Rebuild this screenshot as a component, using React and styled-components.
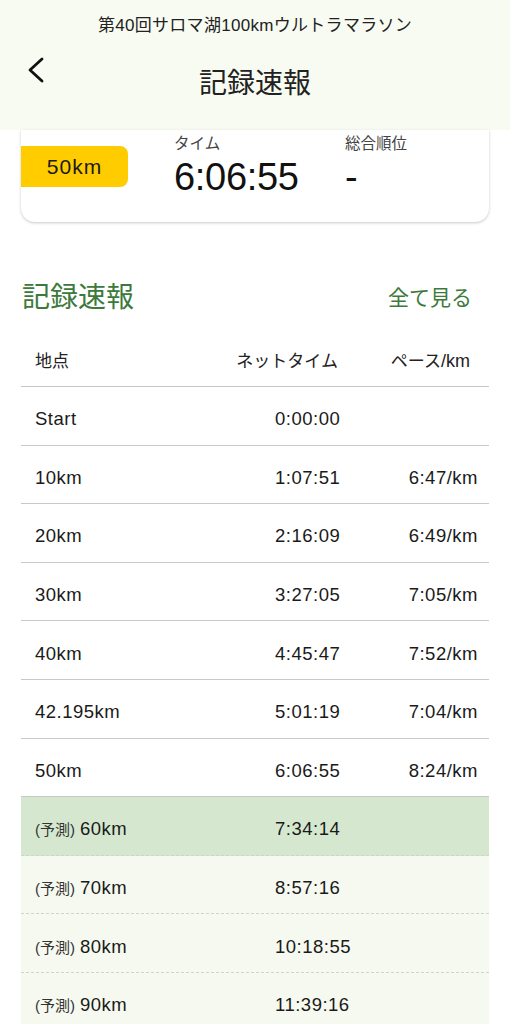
import React from "react";
import styled, { createGlobalStyle } from "styled-components";

const GlobalStyle = createGlobalStyle`
  html, body {
    margin: 0;
    padding: 0;
    background: #ffffff;
  }
  body {
    font-family: "Liberation Sans", "Noto Sans CJK JP", sans-serif;
    color: #1c1c1c;
    -webkit-font-smoothing: antialiased;
  }
  * { box-sizing: border-box; }
`;

const Page = styled.div`
  width: 510px;
  min-height: 1024px;
  overflow: hidden;
`;

const Header = styled.header`
  background: #f8fbf1;
  height: 130px;
  padding-top: 14px;
  display: flex;
  flex-direction: column;
`;

const EventTitle = styled.div`
  text-align: center;
  font-size: 17px;
  line-height: 24px;
  letter-spacing: 0.3px;
  color: #222;
`;

const NavRow = styled.div`
  display: grid;
  grid-template-columns: 30px 1fr 30px;
  padding: 0 27px;
`;

const BackButton = styled.button`
  margin-top: 19px;
  width: 20px;
  height: 26px;
  padding: 0;
  border: none;
  background: transparent;
  display: flex;
  align-items: center;
  justify-content: flex-start;
  cursor: pointer;
`;

const PageTitle = styled.h1`
  margin: 25.5px 0 0;
  text-align: center;
  font-size: 28px;
  line-height: 40px;
  font-weight: 400;
  color: #222;
`;

const SummaryCard = styled.section`
  margin: 0 21px;
  height: 92px;
  background: #fff;
  border-radius: 0 0 14px 14px;
  box-shadow: 0 1px 3px rgba(0, 0, 0, 0.22);
  display: grid;
  grid-template-columns: 153px 171px 1fr;
  align-items: start;
`;

const DistanceBadge = styled.div`
  margin-top: 16px;
  width: 107px;
  height: 41px;
  background: #ffcc00;
  border-radius: 0 8px 8px 0;
  display: flex;
  align-items: center;
  justify-content: center;
  font-size: 21px;
  letter-spacing: 1px;
  color: #1a1a1a;
`;

const Stat = styled.div`
  display: flex;
  flex-direction: column;
  padding-top: 4px;
`;

const StatLabel = styled.span`
  font-size: 15.5px;
  line-height: 20px;
  color: #444;
`;

const StatValue = styled.span`
  margin-top: 3px;
  font-size: 38px;
  line-height: 40px;
  letter-spacing: -0.3px;
  color: #111;
`;

const SectionHead = styled.div`
  margin-top: 56px;
  display: flex;
  align-items: center;
  justify-content: space-between;
  padding: 0 38px 0 22px;
  height: 40px;
`;

const SectionTitle = styled.h2`
  margin: 0;
  font-size: 28px;
  line-height: 40px;
  font-weight: 400;
  color: #3c7a3c;
`;

const SeeAll = styled.a`
  font-size: 21px;
  line-height: 30px;
  color: #3c7a3c;
  text-decoration: none;
  cursor: pointer;
`;

const Table = styled.div`
  margin: 12px 21px 0;
`;

const HeadRow = styled.div`
  height: 57px;
  display: grid;
  grid-template-columns: 1fr 140px 132px;
  align-items: center;
  padding: 3px 19px 0 14px;
  border-bottom: 1.5px solid #c6c6c6;
  font-size: 17px;
  color: #222;
`;

const HeadCell = styled.span`
  text-align: ${(p) => p.$align || "left"};
`;

const PaceUnit = styled.span`
  font-size: 18px;
`;

const Row = styled.div`
  height: 58.6px;
  display: grid;
  grid-template-columns: 240px 1fr auto;
  align-items: center;
  padding: 7px 11px 0 14px;
  background: ${(p) =>
    p.$variant === "current" ? "#d5e8cf" : p.$variant === "forecast" ? "#f6f9ef" : "#fff"};
  border-bottom: 1.5px ${(p) => (p.$dashed ? "dashed" : "solid")}
    ${(p) => (p.$dashed ? "#cfd4ca" : "#c8c8c8")};
  font-size: 18.5px;
  letter-spacing: 0.5px;
  color: #1a1a1a;
`;

const Cell = styled.span`
  text-align: ${(p) => p.$align || "left"};
  white-space: nowrap;
`;

const ForecastTag = styled.span`
  font-size: 15px;
  letter-spacing: 0;
  color: #333;
  margin-right: 5px;
`;

const splits = [
  { point: "Start", time: "0:00:00", pace: "" },
  { point: "10km", time: "1:07:51", pace: "6:47/km" },
  { point: "20km", time: "2:16:09", pace: "6:49/km" },
  { point: "30km", time: "3:27:05", pace: "7:05/km" },
  { point: "40km", time: "4:45:47", pace: "7:52/km" },
  { point: "42.195km", time: "5:01:19", pace: "7:04/km" },
  { point: "50km", time: "6:06:55", pace: "8:24/km" },
];

const forecasts = [
  { point: "60km", time: "7:34:14", current: true },
  { point: "70km", time: "8:57:16" },
  { point: "80km", time: "10:18:55" },
  { point: "90km", time: "11:39:16" },
];

const ChevronLeft = () => (
  <svg width="18" height="26" viewBox="0 0 18 26" fill="none">
    <polyline
      points="15,2 3,13 15,24"
      stroke="#111"
      strokeWidth="2.8"
      strokeLinecap="round"
      strokeLinejoin="round"
    />
  </svg>
);

export default function App() {
  return (
    <Page>
      <GlobalStyle />
      <Header>
        <EventTitle>第40回サロマ湖100kmウルトラマラソン</EventTitle>
        <NavRow>
          <BackButton aria-label="戻る">
            <ChevronLeft />
          </BackButton>
          <PageTitle>記録速報</PageTitle>
          <span />
        </NavRow>
      </Header>

      <SummaryCard>
        <DistanceBadge>50km</DistanceBadge>
        <Stat>
          <StatLabel>タイム</StatLabel>
          <StatValue>6:06:55</StatValue>
        </Stat>
        <Stat>
          <StatLabel>総合順位</StatLabel>
          <StatValue>-</StatValue>
        </Stat>
      </SummaryCard>

      <SectionHead>
        <SectionTitle>記録速報</SectionTitle>
        <SeeAll>全て見る</SeeAll>
      </SectionHead>

      <Table>
        <HeadRow>
          <HeadCell>地点</HeadCell>
          <HeadCell $align="right">ネットタイム</HeadCell>
          <HeadCell $align="right">
            ペース<PaceUnit>/km</PaceUnit>
          </HeadCell>
        </HeadRow>
        {splits.map((s) => (
          <Row key={s.point}>
            <Cell>{s.point}</Cell>
            <Cell>{s.time}</Cell>
            <Cell $align="right">{s.pace}</Cell>
          </Row>
        ))}
        {forecasts.map((f, i) => (
          <Row
            key={f.point}
            $variant={f.current ? "current" : "forecast"}
            $dashed={i < forecasts.length - 1}
          >
            <Cell>
              <ForecastTag>(予測)</ForecastTag>
              {f.point}
            </Cell>
            <Cell>{f.time}</Cell>
            <Cell $align="right" />
          </Row>
        ))}
      </Table>
    </Page>
  );
}
